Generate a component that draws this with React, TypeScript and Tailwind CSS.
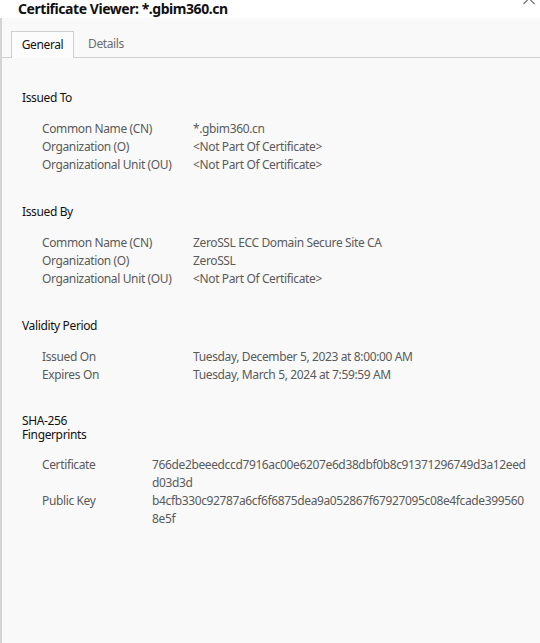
const font = { fontFamily: '"Noto Sans", "Segoe UI", sans-serif' };

type Row = { label: string; value: string[] };

const sections: { title: string[]; valueCol: string; rows: Row[] }[] = [
  {
    title: ['Issued To'],
    valueCol: 'w-[151px]',
    rows: [
      { label: 'Common Name (CN)', value: ['*.gbim360.cn'] },
      { label: 'Organization (O)', value: ['<Not Part Of Certificate>'] },
      { label: 'Organizational Unit (OU)', value: ['<Not Part Of Certificate>'] },
    ],
  },
  {
    title: ['Issued By'],
    valueCol: 'w-[151px]',
    rows: [
      { label: 'Common Name (CN)', value: ['ZeroSSL ECC Domain Secure Site CA'] },
      { label: 'Organization (O)', value: ['ZeroSSL'] },
      { label: 'Organizational Unit (OU)', value: ['<Not Part Of Certificate>'] },
    ],
  },
  {
    title: ['Validity Period'],
    valueCol: 'w-[151px]',
    rows: [
      { label: 'Issued On', value: ['Tuesday, December 5, 2023 at 8:00:00 AM'] },
      { label: 'Expires On', value: ['Tuesday, March 5, 2024 at 7:59:59 AM'] },
    ],
  },
  {
    title: ['SHA-256', 'Fingerprints'],
    valueCol: 'w-[110px]',
    rows: [
      {
        label: 'Certificate',
        value: ['766de2beeedccd7916ac00e6207e6d38dbf0b8c91371296749d3a12eed', 'd03d3d'],
      },
      {
        label: 'Public Key',
        value: ['b4cfb330c92787a6cf6f6875dea9a052867f67927095c08e4fcade399560', '8e5f'],
      },
    ],
  },
];

export default function App() {
  return (
    <div className="w-[540px] h-[643px] overflow-hidden bg-[#f9f9f9] flex flex-col" style={font}>
      <div className="h-[18px] bg-white relative shrink-0">
        <div className="absolute left-[18px] top-[-2px] text-[14px] font-bold tracking-[-0.45px] text-[#111] leading-[22px]">
          Certificate Viewer: *.gbim360.cn
        </div>
        <svg className="absolute left-[522px] top-[-4px]" width="14" height="10" viewBox="0 0 14 10">
          <path d="M1.5 8 L7 2.5 L12.5 8" fill="none" stroke="#6b6b6b" strokeWidth="1.1" />
        </svg>
      </div>
      <div className="flex-1 border-l-2 border-[#d4d4d4] flex flex-col tracking-[-0.37px]">
        <div className="flex items-end pt-[14px] pl-[9px] border-b border-[#cfcfcf] h-[40px]">
          <div className="h-[27px] w-[63px] bg-[#fcfcfc] border border-b-0 border-[#cfcfcf] flex items-center justify-center text-[12px] text-[#111] -mb-px">
            General
          </div>
          <div className="h-[26px] px-[14px] flex items-center text-[12px] text-[#6d6d6d]">Details</div>
        </div>
        <div className="pl-[20px] pt-[33px] text-[12px]">
          {sections.map((s, i) => {
            const last = i === sections.length - 1;
            return (
              <div key={i} className={i === 0 ? '' : last ? 'mt-[30px]' : 'mt-[31px]'}>
                <div className="text-[#111] leading-[14px]">
                  {s.title.map((t) => (
                    <div key={t}>{t}</div>
                  ))}
                </div>
                <div className={(last ? 'mt-[14px]' : 'mt-[15px]') + ' pl-[20px]'}>
                  {s.rows.map((r) => (
                    <div key={r.label} className="flex text-[#5a5a5a] leading-[18px]">
                      <div className={s.valueCol + ' shrink-0'}>{r.label}</div>
                      <div>
                        {r.value.map((v) => (
                          <div key={v}>{v}</div>
                        ))}
                      </div>
                    </div>
                  ))}
                </div>
              </div>
            );
          })}
        </div>
      </div>
    </div>
  );
}
